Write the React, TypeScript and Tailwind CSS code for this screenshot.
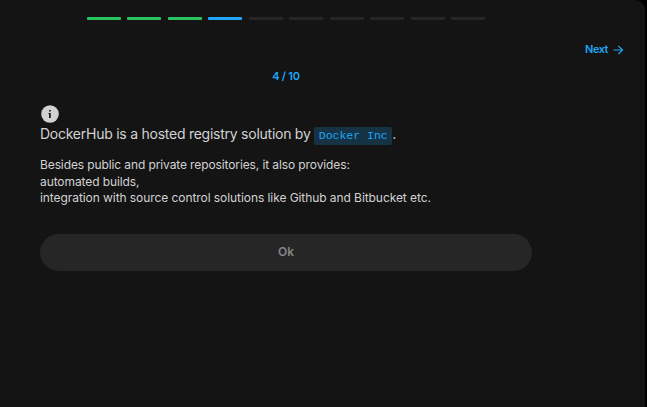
const segments = ['g', 'g', 'g', 'b', 'n', 'n', 'n', 'n', 'n', 'n'];
const colors: Record<string, string> = { g: 'bg-[#28c45d]', b: 'bg-[#1fa5fb]', n: 'bg-[#262626]' };

export default function App() {
  return (
    <div className="h-[407px] w-[647px] overflow-hidden bg-black font-['Inter',sans-serif]">
      <main className="flex h-full w-[645px] flex-col rounded-tr-[10px] bg-[#141414] text-[#d2d2d2]">
        <div className="flex gap-[6.46px] pt-[17px] pl-[87px]">
          {segments.map((s, i) => (
            <span key={i} className={`h-[3px] w-[34px] rounded-[1px] ${colors[s]}`} />
          ))}
        </div>
        <button className="mt-[21px] mr-[21px] flex h-4 items-center gap-[5px] self-end text-[11px] font-semibold tracking-[-0.5px] text-[#1fa5f5]">
          Next
          <svg width="11" height="11" viewBox="0 0 11 11" fill="none" stroke="currentColor" strokeWidth="1.2">
            <path d="M.5 6h9M5.3 1.8 9.5 6 5.3 10.2" />
          </svg>
        </button>
        <section className="ml-10 w-[492px]">
          <p className="mt-[11px] text-center text-[11px] leading-4 font-semibold tracking-[-0.25px] text-[#1fa5f5]">4 / 10</p>
          <svg className="mt-[21px]" width="20" height="18" viewBox="0 0 20 18">
            <circle cx="10" cy="9" r="8.8" fill="#d2d2d2" />
            <path d="M9 5h1.8v1.6H9zM8.4 8h2.4v5H9V9h-.6z" fill="#202020" />
          </svg>
          <h1 className="flex h-5 items-start text-[14px] leading-[22px] tracking-[-0.25px] whitespace-pre">
            DockerHub is a hosted registry solution by <code className="mt-1 h-[18px] rounded-[2px] bg-[#163245] px-[4.5px] font-['Liberation_Mono',monospace] text-[11.5px] leading-[18px] tracking-normal text-[#1fa5f5]">Docker Inc</code>.
          </h1>
          <div className="mt-[14px] h-[50px] text-[12px] leading-[16.6px]">
            <p className="tracking-[-0.11px]">Besides public and private repositories, it also provides:</p>
            <p className="tracking-[-0.09px]">automated builds,</p>
            <p className="tracking-[-0.07px]">integration with source control solutions like Github and Bitbucket etc.</p>
          </div>
          <button className="mt-[27px] flex h-[37px] w-full items-center justify-center rounded-full bg-[#262626] pb-px text-[12px] font-semibold text-[#858585]">Ok</button>
        </section>
      </main>
    </div>
  );
}
